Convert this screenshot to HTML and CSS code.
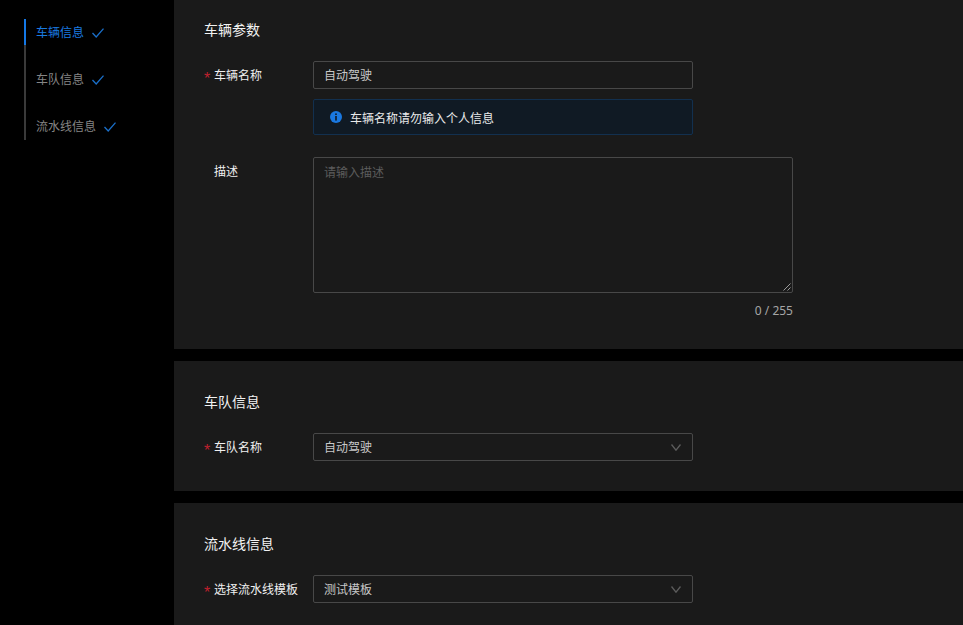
FILE: index.html
```html
<!DOCTYPE html>
<html lang="zh-CN">
<head>
<meta charset="utf-8">
<title>车辆信息</title>
<link rel="stylesheet" href="styles.css">
</head>
<body>
<div class="page">
  <nav class="steps">
    <div class="step step-active"><span>车辆信息</span><svg class="check" viewBox="0 0 12 10"><path d="M0.5 5 L4.2 9 L11.5 0.6"/></svg></div>
    <div class="step"><span>车队信息</span><svg class="check" viewBox="0 0 12 10"><path d="M0.5 5 L4.2 9 L11.5 0.6"/></svg></div>
    <div class="step"><span>流水线信息</span><svg class="check" viewBox="0 0 12 10"><path d="M0.5 5 L4.2 9 L11.5 0.6"/></svg></div>
  </nav>
  <main class="content">
    <section class="panel panel-first">
      <h2 class="panel-title">车辆参数</h2>
      <div class="row">
        <label class="label"><i class="req">*</i>车辆名称</label>
        <div class="field">
          <div class="input">自动驾驶</div>
          <div class="alert">
            <svg class="alert-icon" viewBox="0 0 12 12"><circle cx="6" cy="6" r="6"/><rect class="dot" x="5.2" y="2.4" width="1.6" height="1.6"/><rect class="dot" x="5.2" y="5" width="1.6" height="4.6"/></svg>
            <span>车辆名称请勿输入个人信息</span>
          </div>
        </div>
      </div>
      <div class="row row-desc">
        <label class="label"><i class="req req-hidden">*</i>描述</label>
        <div class="field-wide">
          <div class="textarea">
            <span class="placeholder">请输入描述</span>
            <svg class="resize" viewBox="0 0 8 8"><path d="M0.5 7.5 L7.5 0.5 M4.5 7.5 L7.5 4.5"/></svg>
          </div>
          <div class="count">0 / 255</div>
        </div>
      </div>
    </section>
    <section class="panel">
      <h2 class="panel-title">车队信息</h2>
      <div class="row">
        <label class="label"><i class="req">*</i>车队名称</label>
        <div class="input select">
          <span>自动驾驶</span>
          <svg class="chev" viewBox="0 0 10 7"><path d="M0.5 0.5 L5 6.2 L9.5 0.5"/></svg>
        </div>
      </div>
    </section>
    <section class="panel">
      <h2 class="panel-title">流水线信息</h2>
      <div class="row">
        <label class="label"><i class="req">*</i>选择流水线模板</label>
        <div class="input select">
          <span>测试模板</span>
          <svg class="chev" viewBox="0 0 10 7"><path d="M0.5 0.5 L5 6.2 L9.5 0.5"/></svg>
        </div>
      </div>
    </section>
  </main>
</div>
</body>
</html>
```
FILE: styles.css
```css
* { box-sizing: border-box; }
html, body { margin: 0; height: 100%; background: #000; overflow: hidden; }
body { font-family: "Noto Sans CJK SC", "Noto Sans", sans-serif; font-size: 12px; color: #e6e6e6; }
.page { display: flex; height: 625px; overflow: hidden; }

.steps { flex: 0 0 174px; padding: 19px 0 0 24px; align-self: flex-start; }
.step {
  display: flex; align-items: center; gap: 8px;
  height: 47px; padding: 0 0 21px 10px;
  border-left: 2px solid #3a3a3a;
  color: #858585; line-height: 26px;
}
.step:last-child { height: 27px; padding-bottom: 1px; }
.step-active { color: #1a7be0; position: relative; }
.step-active::before {
  content: ""; position: absolute; left: -2px; top: 0;
  width: 2px; height: 26px; background: #1478e6;
}
.check { width: 12px; height: 10px; margin-top: 2px; fill: none; stroke: #1a6fc9; stroke-width: 1.3; }

.content { flex: 1; display: flex; flex-direction: column; gap: 12px; min-width: 0; }
.panel { background: #1a1a1a; padding: 30px; }
.panel-first { padding-top: 19px; }
.panel-title { margin: -1px 0 21px; font-size: 14px; font-weight: 400; line-height: 22px; color: #f2f2f2; }

.row { display: flex; align-items: flex-start; }
.row-desc { margin-top: 22px; }
.label { flex: 0 0 109px; display: flex; height: 28px; line-height: 28px; color: #f0f0f0; }
.req {
  flex: 0 0 10px; padding-top: 4px; font-style: normal; color: #c0202e;
  font-family: "Liberation Sans", sans-serif; font-size: 16px;
}
.req-hidden { visibility: hidden; }

.field { width: 380px; display: flex; flex-direction: column; gap: 10px; }
.field-wide { width: 480px; }

.input {
  width: 380px; height: 28px; padding: 0 10px;
  border: 1px solid #484848; border-radius: 2px;
  line-height: 26px; color: #c8c8c8;
}
.select { display: flex; align-items: flex-start; justify-content: space-between; }
.chev { width: 10px; height: 7px; margin: 10px 1px 0 0; fill: none; stroke: #5c5c5c; stroke-width: 1.3; }

.alert {
  height: 36px; display: flex; align-items: center; gap: 8px; padding-left: 16px;
  background: #101a24; border: 1px solid #12304f; border-radius: 2px;
  color: #eaeaea;
}
.alert-icon { width: 12px; height: 12px; fill: #1a78e0; }
.dot { fill: #101a24; }

.textarea {
  position: relative; height: 136px; padding: 4px 10px;
  border: 1px solid #484848; border-radius: 2px;
  line-height: 20px;
}
.placeholder { color: #5c5c5c; }
.resize {
  position: absolute; right: 1px; bottom: 1px; width: 8px; height: 8px;
  fill: none; stroke: #9a9a9a; stroke-width: 1;
}
.count { margin-top: 10px; font-family: "Noto Sans", sans-serif; line-height: 16px; text-align: right; color: #a6a6a6; }
```
